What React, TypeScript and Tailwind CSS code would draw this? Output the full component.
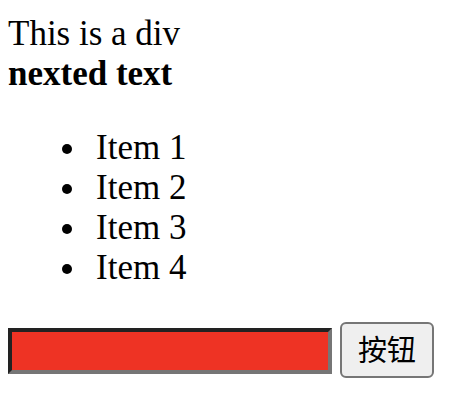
const items = ["Item 1", "Item 2", "Item 3", "Item 4"];

export default function App() {
  return (
    <main className="min-h-screen bg-white px-2 pt-3.5 font-['Liberation_Serif','Times_New_Roman',serif] text-[35px] leading-10 text-black">
      <div>
        This is a div
        <div className="font-bold">nexted text</div>
      </div>
      <ul className="my-[34px] pl-[54px]">
        {items.map((item) => (
          <li
            key={item}
            className="flex items-center gap-6 before:mt-0.5 before:size-2.5 before:rounded-full before:bg-black before:content-['']"
          >
            {item}
          </li>
        ))}
      </ul>
      <div className="flex items-end gap-2">
        <input
          type="text"
          aria-label="Text"
          className="mb-1 h-[46px] w-[324px] min-w-0 border-4 border-t-[#222222] border-l-[#222222] border-r-[#767676] border-b-[#767676] bg-[#ee3324] px-1 text-[28px] outline-none"
        />
        <button
          type="button"
          className="h-14 shrink-0 rounded-md border-2 border-[#767676] bg-[#efefef] px-4 pb-1 font-['Noto_Sans_CJK_SC',sans-serif] text-[29px] leading-10"
        >
          按钮
        </button>
      </div>
    </main>
  );
}
